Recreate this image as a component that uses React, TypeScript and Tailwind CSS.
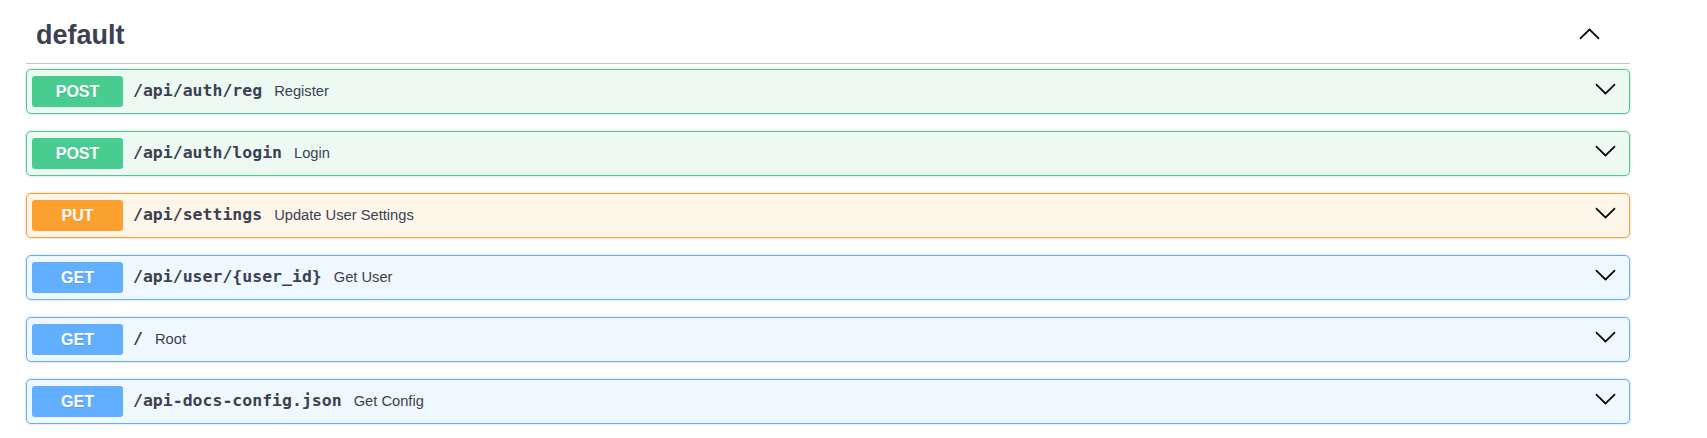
import React from 'react';

type Method = 'POST' | 'PUT' | 'GET';

const OPS: { method: Method; path: string; summary: string }[] = [
  { method: 'POST', path: '/api/auth/reg', summary: 'Register' },
  { method: 'POST', path: '/api/auth/login', summary: 'Login' },
  { method: 'PUT', path: '/api/settings', summary: 'Update User Settings' },
  { method: 'GET', path: '/api/user/{user_id}', summary: 'Get User' },
  { method: 'GET', path: '/', summary: 'Root' },
  { method: 'GET', path: '/api-docs-config.json', summary: 'Get Config' },
];

const STYLES: Record<Method, { block: string; badge: string }> = {
  POST: { block: 'bg-[#edfaf4] border-[#49cc90]', badge: 'bg-[#49cc90]' },
  PUT: { block: 'bg-[#fff6ea] border-[#fca130]', badge: 'bg-[#fca130]' },
  GET: { block: 'bg-[#eff7ff] border-[#61affe]', badge: 'bg-[#61affe]' },
};

const ARROW =
  'M17.418 6.109c.272-.268.709-.268.979 0s.271.701 0 .969l-7.908 7.83c-.27.268-.707.268-.979 0l-7.908-7.83c-.27-.268-.27-.701 0-.969.271-.268.709-.268.979 0L10 13.25l7.418-7.141z';

const Arrow: React.FC<{ up?: boolean; className?: string }> = ({ up, className }) => (
  <svg viewBox="0 0 20 20" className={`w-[23px] h-[23px] shrink-0 ${up ? 'rotate-180' : ''} ${className ?? ''}`}>
    <path d={ARROW} fill="#000" />
  </svg>
);

const Operation: React.FC<{ method: Method; path: string; summary: string }> = ({ method, path, summary }) => {
  const s = STYLES[method];
  return (
    <div
      className={`h-[45px] flex items-center border rounded-[5px] pl-[5px] pr-[12px] shadow-[0_0_3px_rgba(0,0,0,0.19)] ${s.block}`}
    >
      <span
        className={`w-[91px] h-[31px] leading-[31px] rounded-[3px] text-center text-white font-bold text-[16px] [text-shadow:0_1px_0_rgba(0,0,0,0.1)] ${s.badge}`}
      >
        {method}
      </span>
      <span className="pl-[10px] pr-[12px] font-['DejaVu_Sans_Mono',monospace] font-bold text-[16.5px] text-[#3b4151]">
        {path}
      </span>
      <span className="flex-1 text-[14.7px] text-[#3b4151]">{summary}</span>
      <Arrow className="mb-[6px]" />
    </div>
  );
};

export default function App() {
  return (
    <div className="w-[1707px] h-[438px] bg-white font-['Liberation_Sans',Arial,sans-serif]">
      <div className="ml-[26px] w-[1604px]">
        <div className="h-[64px] pt-[6px] pl-[10px] pr-[29px] flex items-center justify-between border-b border-[#c4c6cb]">
          <h3 className="text-[27px] leading-[32px] font-bold text-[#3b4151]">default</h3>
          <Arrow up />
        </div>
        <div className="mt-[5px] flex flex-col gap-[17px]">
          {OPS.map((op, i) => (
            <Operation key={i} {...op} />
          ))}
        </div>
      </div>
    </div>
  );
}
